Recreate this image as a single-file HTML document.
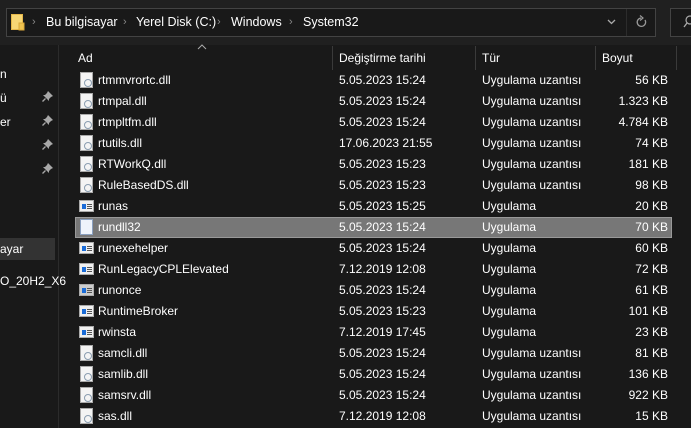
<!DOCTYPE html>
<html><head><meta charset="utf-8"><style>
*{margin:0;padding:0;box-sizing:border-box}
body{width:691px;height:428px;background:#191919;overflow:hidden;position:relative;font-family:"Liberation Sans","DejaVu Sans",sans-serif;font-size:12px;color:#fff}
.top{position:absolute;left:0;top:0;width:691px;height:45px;background:#202020}
.addr{position:absolute;left:6px;top:8px;width:650px;height:29px;border:1px solid #434343;background:#191919}
.addr .div{position:absolute;left:619px;top:0;width:1px;height:27px;background:#2c2c2c}
.search{position:absolute;left:670px;top:8px;width:40px;height:29px;border:1px solid #434343;background:#191919}
.t{position:absolute;white-space:nowrap}
.crumb{top:15px;font-size:12.5px}
.chev{color:#888;font-size:11px;top:16px}
.sep{position:absolute;width:1px;background:#3a3a3a}
.row{position:absolute;left:75px;width:597px;height:21px}
.row span{position:absolute;top:3px;white-space:nowrap}
.n{left:23px}.d{left:264px}.ty{left:407px}.s{right:4px}
.ic{position:absolute;left:5px;top:2px;width:13px;height:16px}
.dll{background:#f4f4f4;border:1px solid #aaa}
.dll:after{content:"";position:absolute;left:3px;top:6px;width:6px;height:6px;border-radius:50%;border:1.5px solid #8a9db0}
.exe{top:4px;height:12px;width:15px;left:4px;background:#f0f0f0;border:1px solid #aaa}
.exe:before{content:"";position:absolute;left:2px;top:3px;width:4px;height:5px;background:#1a6cd8}
.exe:after{content:"";position:absolute;left:7px;top:3px;width:5px;height:1px;background:#555;box-shadow:0 2px #555,0 4px #555}
.pin{position:absolute;left:42px}
</style></head><body>
<div class="top"></div>
<div class="addr"><div class="div"></div></div>
<div class="search"></div>
<svg style="position:absolute;left:11px;top:14px" width="14" height="17"><rect x="0.5" y="0.5" width="11" height="15" fill="#f8d775" stroke="#e6b84a"/><rect x="8" y="9" width="5" height="7" fill="#f0c34f" stroke="#d9a83a"/></svg>
<span class="t chev" style="left:32px">›</span>
<span class="t crumb" style="left:46px">Bu bilgisayar</span>
<span class="t chev" style="left:123px">›</span>
<span class="t crumb" style="left:136px">Yerel Disk (C:)</span>
<span class="t chev" style="left:217px">›</span>
<span class="t crumb" style="left:231px">Windows</span>
<span class="t chev" style="left:289px">›</span>
<span class="t crumb" style="left:303px">System32</span>
<svg style="position:absolute;left:607px;top:19px" width="9" height="6"><path d="M1 1L4.5 4.5L8 1" stroke="#aaa" stroke-width="1.3" fill="none"/></svg>
<svg style="position:absolute;left:636px;top:15px" width="12" height="14"><path d="M9 5A4.2 4.2 0 1 1 5 3" stroke="#999" stroke-width="1.3" fill="none"/><path d="M4 0.5L7 3L4 5.5" stroke="#999" stroke-width="1.2" fill="none"/></svg>
<svg style="position:absolute;left:683px;top:15px" width="10" height="14"><circle cx="7" cy="5" r="4" stroke="#aaa" fill="none" stroke-width="1.2"/><path d="M4 8L1 12" stroke="#aaa" stroke-width="1.3"/></svg>
<div class="sep" style="left:58px;top:45px;height:383px;background:#2b2b2b"></div>
<span class="t" style="left:0;top:67px">n</span>
<span class="t" style="left:0;top:91px">ü</span>
<span class="t" style="left:0;top:115px">er</span>
<svg class="pin" style="top:91px" width="11" height="11"><path d="M6 0L11 5L9 6L7 8L7 10L1 4L3 4L5 2Z" fill="#a8a8a8"/><path d="M3.5 7.5L0.5 10.5" stroke="#a8a8a8" stroke-width="1.3"/></svg>
<svg class="pin" style="top:115px" width="11" height="11"><path d="M6 0L11 5L9 6L7 8L7 10L1 4L3 4L5 2Z" fill="#a8a8a8"/><path d="M3.5 7.5L0.5 10.5" stroke="#a8a8a8" stroke-width="1.3"/></svg>
<svg class="pin" style="top:139px" width="11" height="11"><path d="M6 0L11 5L9 6L7 8L7 10L1 4L3 4L5 2Z" fill="#a8a8a8"/><path d="M3.5 7.5L0.5 10.5" stroke="#a8a8a8" stroke-width="1.3"/></svg>
<svg class="pin" style="top:163px" width="11" height="11"><path d="M6 0L11 5L9 6L7 8L7 10L1 4L3 4L5 2Z" fill="#a8a8a8"/><path d="M3.5 7.5L0.5 10.5" stroke="#a8a8a8" stroke-width="1.3"/></svg>
<div style="position:absolute;left:0;top:238px;width:55px;height:22px;background:#333"></div>
<span class="t" style="left:0;top:242px">ayar</span>
<span class="t" style="left:0;top:274px">O_20H2_X6</span>
<svg style="position:absolute;left:197px;top:44px" width="10" height="6"><path d="M1 5L5 1L9 5" stroke="#aaa" fill="none"/></svg>
<div class="sep" style="left:332px;top:46px;height:24px"></div>
<div class="sep" style="left:475px;top:46px;height:24px"></div>
<div class="sep" style="left:595px;top:46px;height:24px"></div>
<div class="sep" style="left:676px;top:46px;height:24px"></div>
<span class="t" style="left:78px;top:51px">Ad</span>
<span class="t" style="left:339px;top:51px">Değiştirme tarihi</span>
<span class="t" style="left:482px;top:51px">Tür</span>
<span class="t" style="left:602px;top:51px">Boyut</span>

<div class="row" style="top:70px"><i class="ic dll"></i><span class="n">rtmmvrortc.dll</span><span class="d">5.05.2023 15:24</span><span class="ty">Uygulama uzantısı</span><span class="s">56 KB</span></div>
<div class="row" style="top:91px"><i class="ic dll"></i><span class="n">rtmpal.dll</span><span class="d">5.05.2023 15:24</span><span class="ty">Uygulama uzantısı</span><span class="s">1.323 KB</span></div>
<div class="row" style="top:112px"><i class="ic dll"></i><span class="n">rtmpltfm.dll</span><span class="d">5.05.2023 15:24</span><span class="ty">Uygulama uzantısı</span><span class="s">4.784 KB</span></div>
<div class="row" style="top:133px"><i class="ic dll"></i><span class="n">rtutils.dll</span><span class="d">17.06.2023 21:55</span><span class="ty">Uygulama uzantısı</span><span class="s">74 KB</span></div>
<div class="row" style="top:154px"><i class="ic dll"></i><span class="n">RTWorkQ.dll</span><span class="d">5.05.2023 15:23</span><span class="ty">Uygulama uzantısı</span><span class="s">181 KB</span></div>
<div class="row" style="top:175px"><i class="ic dll"></i><span class="n">RuleBasedDS.dll</span><span class="d">5.05.2023 15:23</span><span class="ty">Uygulama uzantısı</span><span class="s">98 KB</span></div>
<div class="row" style="top:196px"><i class="ic exe"></i><span class="n">runas</span><span class="d">5.05.2023 15:25</span><span class="ty">Uygulama</span><span class="s">20 KB</span></div>
<div class="row" style="top:217px;background:#777;border:1px solid #999"><i class="ic" style="background:#eef3fb;border:1px solid #8aa0c0;top:1px;left:4px"></i><span class="n" style="left:22px;top:2px">rundll32</span><span class="d" style="left:263px;top:2px">5.05.2023 15:24</span><span class="ty" style="left:406px;top:2px">Uygulama</span><span class="s" style="right:3px;top:2px">70 KB</span></div>
<div class="row" style="top:238px"><i class="ic exe"></i><span class="n">runexehelper</span><span class="d">5.05.2023 15:24</span><span class="ty">Uygulama</span><span class="s">60 KB</span></div>
<div class="row" style="top:259px"><i class="ic exe"></i><span class="n">RunLegacyCPLElevated</span><span class="d">7.12.2019 12:08</span><span class="ty">Uygulama</span><span class="s">72 KB</span></div>
<div class="row" style="top:280px"><i class="ic exe" style="background:#ccc"></i><span class="n">runonce</span><span class="d">5.05.2023 15:24</span><span class="ty">Uygulama</span><span class="s">61 KB</span></div>
<div class="row" style="top:301px"><i class="ic exe"></i><span class="n">RuntimeBroker</span><span class="d">5.05.2023 15:23</span><span class="ty">Uygulama</span><span class="s">101 KB</span></div>
<div class="row" style="top:322px"><i class="ic exe"></i><span class="n">rwinsta</span><span class="d">7.12.2019 17:45</span><span class="ty">Uygulama</span><span class="s">23 KB</span></div>
<div class="row" style="top:343px"><i class="ic dll"></i><span class="n">samcli.dll</span><span class="d">5.05.2023 15:24</span><span class="ty">Uygulama uzantısı</span><span class="s">81 KB</span></div>
<div class="row" style="top:364px"><i class="ic dll"></i><span class="n">samlib.dll</span><span class="d">5.05.2023 15:24</span><span class="ty">Uygulama uzantısı</span><span class="s">136 KB</span></div>
<div class="row" style="top:385px"><i class="ic dll"></i><span class="n">samsrv.dll</span><span class="d">5.05.2023 15:24</span><span class="ty">Uygulama uzantısı</span><span class="s">922 KB</span></div>
<div class="row" style="top:406px"><i class="ic dll"></i><span class="n">sas.dll</span><span class="d">7.12.2019 12:08</span><span class="ty">Uygulama uzantısı</span><span class="s">15 KB</span></div>
</body></html>
